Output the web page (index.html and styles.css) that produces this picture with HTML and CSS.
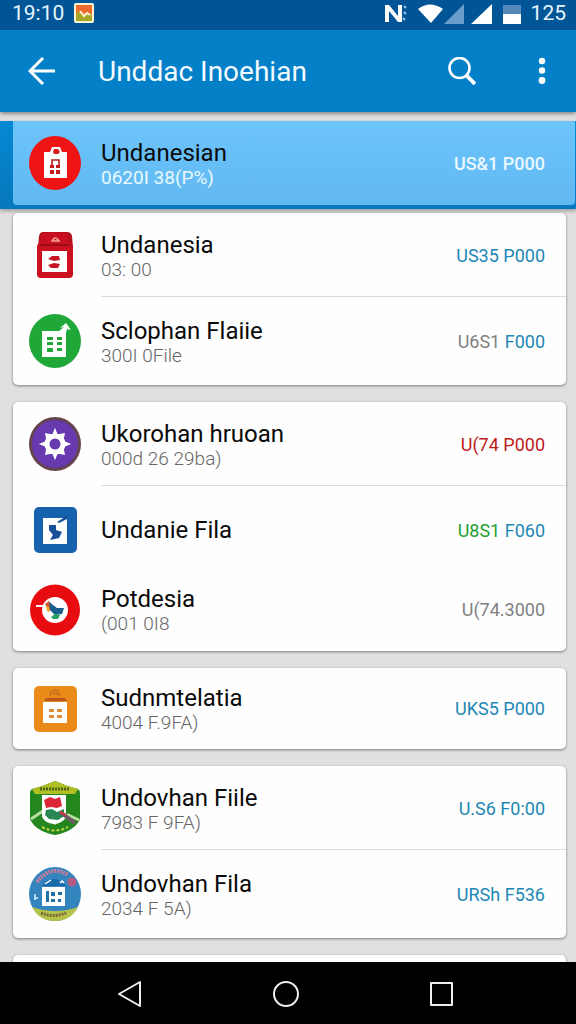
FILE: index.html
```html
<!DOCTYPE html>
<html lang="en">
<head>
    <meta charset="UTF-8">
    <meta name="viewport" content="width=device-width, initial-scale=1.0">
    <title>Unddac Inoehian</title>
    <link rel="stylesheet" href="styles.css">
</head>
<body>
    <div class="statusbar">
        <span>19:10</span>
        <svg class="app-badge" width="20" height="20" viewBox="0 0 20 20">
            <rect width="20" height="20" rx="2" fill="#fff3d0"/>
            <path d="M2 2h16v9H2z" fill="#ee6a2c"/>
            <path d="M2 10l4-2 4 4 4-3 4 3v6H2z" fill="#a7a527"/>
            <path d="M6 8l4 5 3-3 3 2" fill="none" stroke="#fff3d0" stroke-width="2"/>
        </svg>
        <svg class="status-icons" width="138" height="22" viewBox="0 0 138 22">
            <path d="M2 20V3h4l9 11V3h4v17h-4L6 9v11z" fill="#fff"/>
            <path d="M21 4l2 2M21 10l2 2M20 16l2 2" stroke="#9cc4e6" stroke-width="2"/>
            <path d="M35 7q12-9 25 0L48 21z" fill="#fff"/>
            <path d="M81 2v20H61z" fill="#6a9dca"/>
            <path d="M109 2v20H88z" fill="#fff"/>
            <path d="M120 3h18v9h-18z" fill="#5587b9"/>
            <path d="M120 12h18v10h-18z" fill="#fff"/>
        </svg>
        <span>125</span>
    </div>

    <header class="toolbar">
        <button class="icon-btn" aria-label="Back">
            <svg width="28" height="28" viewBox="0 0 28 28" fill="none" stroke="#fff" stroke-width="3">
                <path d="M27 14H3M15 1L2 14l13 13"/>
            </svg>
        </button>
        <h1>Unddac Inoehian</h1>
        <button class="icon-btn search" aria-label="Search">
            <svg width="28" height="28" viewBox="0 0 28 28" fill="none" stroke="#fff">
                <circle cx="11.5" cy="11" r="10" stroke-width="2.6"/>
                <path d="M18 18l9 9" stroke-width="3.8"/>
            </svg>
        </button>
        <button class="icon-btn" aria-label="More options">
            <svg width="8" height="28" viewBox="0 0 8 28" fill="#fff">
                <circle cx="4" cy="4" r="3.2"/>
                <circle cx="4" cy="13.5" r="3.2"/>
                <circle cx="4" cy="23.5" r="3.4"/>
            </svg>
        </button>
    </header>

    <main class="list">
        <div class="selected">
            <div class="row">
                <svg class="icon" viewBox="0 0 52 54">
                    <ellipse cx="26" cy="27" rx="26" ry="27" fill="#ee1414"/>
                    <path d="M15 16h6l2-5h8l2 5h5v26H15z" fill="#fff"/>
                    <path d="M24 16l1-3h4l2 3-2 2h-4z" fill="#d81a1a"/>
                    <path d="M23 32v-8h7v8" fill="none" stroke="#b81c1c" stroke-width="1.6"/>
                    <path d="M21 29h4v3h-4zM27 29h4v3h-4zM21 34h4v4h-4zM27 34h4v4h-4z" fill="#c41c1c"/>
                </svg>
                <div class="text">
                    <h2>Undanesian</h2>
                    <p>0620I 38(P%)</p>
                </div>
                <span class="price">US&amp;1 P000</span>
            </div>
        </div>

        <section class="card">
            <div class="row">
                <svg class="icon" viewBox="0 0 52 54">
                    <path d="M14 4h24q4 0 5 4l1 12H9l1-12q1-4 4-4z" fill="#b50f1c"/>
                    <path d="M13 5h25l2 10H11z" fill="#c9101f"/>
                    <rect x="8" y="15" width="36" height="35" rx="4" fill="#cb1020"/>
                    <path d="M11 17h30" stroke="#8f0b17" stroke-width="1.6"/>
                    <path d="M23 13q3-6 7 0z" fill="none" stroke="#f3a3a3" stroke-width="1.4"/>
                    <path d="M13 23h25v21H13z" fill="#fff"/>
                    <path d="M19 31l4-3h7l1 4-6 1zM19 37l6-2 6 1-2 4h-7z" fill="#c41525"/>
                </svg>
                <div class="text">
                    <h2>Undanesia</h2>
                    <p>03: 00</p>
                </div>
                <span class="price">US35 P000</span>
            </div>
            <div class="row">
                <svg class="icon" viewBox="0 0 52 54">
                    <ellipse cx="26" cy="27" rx="26" ry="27" fill="#1fa838"/>
                    <path d="M13 17h17l5-4-4 1 6-5 5 7-4-1-1 4v24H13z" fill="#fff"/>
                    <path d="M18 23h6v3h-6zM18 28h6v3h-6zM18 34h6v4h-6zM28 23h5v3h-5zM28 28h5v3h-5zM28 34h5v3h-5z" fill="#1fa838"/>
                </svg>
                <div class="text">
                    <h2>Sclophan Flaiie</h2>
                    <p>300I 0File</p>
                </div>
                <span class="price"><span class="gray">U6S1</span> F000</span>
            </div>
        </section>

        <section class="card">
            <div class="row">
                <svg class="icon" viewBox="0 0 52 54">
                    <ellipse cx="26" cy="27" rx="26" ry="27" fill="#654450"/>
                    <ellipse cx="26" cy="27" rx="23" ry="24" fill="#673ab0"/>
                    <circle cx="26" cy="27" r="8" fill="none" stroke="#fff" stroke-width="5"/>
                    <path d="M24 18l2-5 2 5zM24 36l2 5 2-5zM17 25l-5 2 5 2zM35 25l5 2-5 2zM18 22l-1-5 5 1zM30 18l5-1-1 5zM18 32l-1 5 5-1zM30 36l5 1-1-5z" fill="#fff" stroke="#fff" stroke-width="1.6"/>
                </svg>
                <div class="text">
                    <h2>Ukorohan hruoan</h2>
                    <p>000d 26 29ba)</p>
                </div>
                <span class="price red">U(74 P000</span>
            </div>
            <div class="row plain">
                <svg class="icon" viewBox="0 0 52 54">
                    <rect x="5" y="4" width="43" height="46" rx="5" fill="#1762ad"/>
                    <path d="M14 15h24v26H14z" fill="#fff"/>
                    <path d="M39 12L28 19l2 1 8-4z" fill="#174f98"/>
                    <path d="M20 22h7v5l6 2-3 6-9 2 3-5-4-5z" fill="#174f98"/>
                </svg>
                <div class="text">
                    <h2>Undanie Fila</h2>
                </div>
                <span class="price"><span class="green">U8S1</span> F060</span>
            </div>
            <div class="row short">
                <svg class="icon" viewBox="0 0 52 54">
                    <ellipse cx="26" cy="27" rx="25" ry="25.5" fill="#e80c10"/>
                    <circle cx="26" cy="27" r="13" fill="#fff"/>
                    <path d="M7 23h8" stroke="#fff" stroke-width="2"/>
                    <path d="M16 21l4-3 4 5-4 5z" fill="#d8572b"/>
                    <path d="M20 19l8 6h7l-2 6-7 1-5-5z" fill="#17608e"/>
                    <path d="M22 34l4-3 5 1-2 4h-5z" fill="#25a065"/>
                    <path d="M17 23l3 1 1 5-3-1z" fill="#eea62e"/>
                </svg>
                <div class="text">
                    <h2>Potdesia</h2>
                    <p>(001 0I8</p>
                </div>
                <span class="price gray">U(74.3000</span>
            </div>
        </section>

        <section class="card">
            <div class="row single">
                <svg class="icon" viewBox="0 0 52 54">
                    <rect x="5" y="4" width="43" height="46" rx="5" fill="#ea8a18"/>
                    <path d="M15 19l2-3h19l2 3z" fill="#bb5717"/>
                    <path d="M21 14q1-6 5-6t5 6M24 13q2-4 5 0" fill="none" stroke="#bf6a1c" stroke-width="1.5"/>
                    <path d="M14 20h24v21H14z" fill="#fff"/>
                    <path d="M20 27h5v3h-5zM28 27h5v3h-5zM20 33h5v3h-5zM28 33h5v3h-5z" fill="#e08d3c"/>
                </svg>
                <div class="text">
                    <h2>Sudnmtelatia</h2>
                    <p>4004 F.9FA)</p>
                </div>
                <span class="price">UKS5 P000</span>
            </div>
        </section>

        <section class="card">
            <div class="row">
                <svg class="icon" viewBox="0 0 52 54">
                    <path d="M3 8Q15 5 26 0q11 5 23 8 2 1 2 4v26q-5 12-25 16Q6 50 1 38V12q0-3 2-4z" fill="#23861f"/>
                    <path d="M3 8Q15 5 26 0q11 5 23 8l-3 5H6z" fill="#b2bf23"/>
                    <path d="M11 8h30" stroke="#4d651b" stroke-width="3" stroke-dasharray="2 1"/>
                    <path d="M2 38l12-8 12 12 13-8 11 5" fill="none" stroke="#b9dc9f" stroke-width="3"/>
                    <path d="M13 14h24v22q-3 6-12 7-9-1-12-7z" fill="#fff"/>
                    <path d="M15 19l6-3 5 2 5-2 2 9-5 2-6-1-5 1z" fill="#da2636"/>
                    <path d="M17 29l6-1 5 3 7-3v7l-6 4-9-1-4-4z" fill="#278853"/>
                    <path d="M31 31l15 11" stroke="#6e5964" stroke-width="4"/>
                    <path d="M31 31l6 3" stroke="#cf3941" stroke-width="2"/>
                    <path d="M13 46q13 7 26 0" fill="none" stroke="#bdd33b" stroke-width="2" stroke-dasharray="3 2"/>
                </svg>
                <div class="text">
                    <h2>Undovhan Fiile</h2>
                    <p>7983 F 9FA)</p>
                </div>
                <span class="price">U.S6 F0:00</span>
            </div>
            <div class="row">
                <svg class="icon" viewBox="0 0 52 54">
                    <ellipse cx="26" cy="27" rx="26" ry="27" fill="#3484bd"/>
                    <path d="M3 40q11 4 23 4t23-4q-7 14-23 14T3 40z" fill="#b5c34b"/>
                    <path d="M8 15Q22-3 39 8" fill="none" stroke="#c97c9c" stroke-width="4" stroke-dasharray="2 1"/>
                    <circle cx="43" cy="15" r="4.5" fill="#b75b82"/>
                    <path d="M13 19q12-14 24 0z" fill="#176aaa"/>
                    <path d="M16 17l6-4M31 16l2-2 2 2" fill="none" stroke="#fff" stroke-width="1.5"/>
                    <path d="M13 20h23v19H13z" fill="#fff"/>
                    <path d="M17 24h3v11h-3zM22 25h4v4h-4zM22 32h4v3h-4zM29 25h4v3h-4zM29 32h3v3h-3z" fill="#2272aa"/>
                    <path d="M6 27v6M5 31h4" stroke="#d8edfa" stroke-width="1.5"/>
                    <path d="M12 46q12 5 25 0" fill="none" stroke="#7d6938" stroke-width="3" stroke-dasharray="2 1"/>
                </svg>
                <div class="text">
                    <h2>Undovhan Fila</h2>
                    <p>2034 F 5A)</p>
                </div>
                <span class="price">URSh F536</span>
            </div>
        </section>

        <section class="card">
            <div class="row"></div>
        </section>
    </main>

    <nav class="navbar">
        <button class="icon-btn" aria-label="Back">
            <svg width="28" height="28" viewBox="0 0 28 28" fill="none" stroke="#eee" stroke-width="2" stroke-linejoin="round">
                <path d="M24 2v24L3 14z"/>
            </svg>
        </button>
        <button class="icon-btn" aria-label="Home">
            <svg width="28" height="28" viewBox="0 0 28 28" fill="none" stroke="#eee" stroke-width="2">
                <circle cx="14" cy="14" r="12"/>
            </svg>
        </button>
        <button class="icon-btn" aria-label="Recent apps">
            <svg width="28" height="28" viewBox="0 0 28 28" fill="none" stroke="#eee" stroke-width="2" stroke-linejoin="round">
                <path d="M4 3h21v22H4z"/>
            </svg>
        </button>
    </nav>
</body>
</html>
```
FILE: styles.css
```css
* {
    box-sizing: border-box;
}
body {
    display: flex;
    flex-direction: column;
    height: 100vh;
    margin: 0;
    background: #e0e0e1;
    font-family: Roboto, "Liberation Sans", sans-serif;
    color: #0a0a0a;
}
h1, h2, p {
    margin: 0;
    font-weight: 400;
    white-space: nowrap;
}
.icon-btn {
    display: flex;
    padding: 0;
    border: none;
    background: none;
    cursor: pointer;
}

/* top bars */
.statusbar {
    display: flex;
    align-items: center;
    flex: none;
    height: 30px;
    padding: 0 10px 4px 12px;
    background: #005596;
    color: #e6f5ff;
    font-size: 21px;
}
.app-badge {
    margin-left: 10px;
}
.status-icons {
    margin-left: auto;
    margin-right: 10px;
}
.toolbar {
    display: flex;
    align-items: center;
    flex: none;
    height: 82px;
    padding: 0 30px 0 28px;
    background: #0480c8;
    box-shadow: 0 2px 4px rgba(0, 0, 0, 0.4);
    color: #f2fbff;
    z-index: 1;
}
.toolbar h1 {
    margin-left: 42px;
    font-size: 28px;
}
.search {
    margin-left: auto;
    margin-right: 62px;
}

/* list */
.list {
    flex: 1;
    min-height: 0;
    overflow: hidden;
    padding-top: 9px;
}
.selected {
    margin-bottom: 4px;
    padding: 0 1px 4px 13px;
    background: linear-gradient(#0488d2, #0878bd);
    box-shadow: 0 2px 4px rgba(0, 0, 0, 0.3);
}
.card {
    margin: 0 10px 17px 13px;
    border-radius: 5px;
    background: #fefefe;
    box-shadow: 0 1px 3px rgba(0, 0, 0, 0.45);
}
.row {
    display: flex;
    align-items: center;
    position: relative;
    height: 84px;
    padding: 0 21px 0 16px;
}
.selected .row {
    padding-right: 30px;
    border-radius: 0 0 4px 4px;
    background: linear-gradient(#6cc4fb, #62b9f2);
}
.card .row:last-child {
    height: 88px;
}
/* divider starts at the text column */
.card .row:first-child:not(:last-child)::after {
    content: "";
    position: absolute;
    left: 88px;
    right: 0;
    bottom: 0;
    height: 1px;
    background: #dcdcdc;
}
.card .row.plain {
    height: 88px;
}
.card .row.short {
    height: 77px;
    padding-bottom: 6px;
}
.card .row.single {
    height: 81px;
}
.icon {
    flex: none;
    width: 52px;
    height: 54px;
}
.text {
    flex: 1;
    margin-left: 20px;
}
.text h2 {
    font-size: 24px;
    line-height: 28px;
}
.text p {
    color: #666;
    font-size: 19px;
    font-weight: 300;
    line-height: 21px;
}
.price {
    color: #1d87b5;
    font-size: 18px;
    white-space: nowrap;
}
.gray {
    color: #808080;
}
.red {
    color: #bd1a1a;
}
.green {
    color: #26a033;
}
.selected p,
.selected .price {
    color: #eaf8ff;
}
.selected p {
    font-weight: 400;
}
.selected .price {
    font-weight: 500;
}

/* bottom buttons */
.navbar {
    display: flex;
    align-items: center;
    justify-content: space-between;
    flex: none;
    height: 62px;
    padding: 2px 121px 0 116px;
    background: #000;
    z-index: 1;
}
```
